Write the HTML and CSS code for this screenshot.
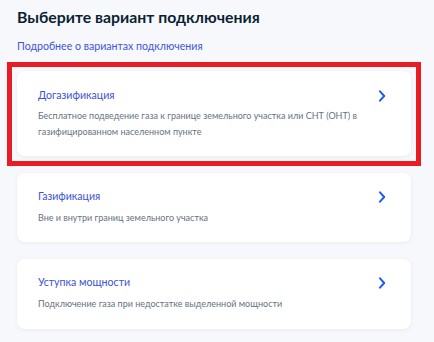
FILE: index.html
```html
<!DOCTYPE html>
<html lang="ru">
<head>
<meta charset="utf-8">
<link rel="stylesheet" href="styles.css">
</head>
<body>
<main class="page">
  <h1 class="title">Выберите вариант подключения</h1>
  <a class="more" href="#">Подробнее о вариантах подключения</a>
  <div class="list">
    <a class="card card--marked" href="#">
      <div class="card__body">
        <div class="card__title">Догазификация</div>
        <div class="card__desc">Бесплатное подведение газа к границе земельного участка или СНТ (ОНТ) в газифицированном населенном пункте</div>
      </div>
      <svg class="chev" width="8" height="12" viewBox="0 0 8 12"><path d="M2 1.3 L6.2 6 L2 10.7" fill="none" stroke="#1d5deb" stroke-width="2" stroke-linecap="round" stroke-linejoin="round"/></svg>
    </a>
    <a class="card" href="#">
      <div class="card__body">
        <div class="card__title">Газификация</div>
        <div class="card__desc">Вне и внутри границ земельного участка</div>
      </div>
      <svg class="chev" width="8" height="12" viewBox="0 0 8 12"><path d="M2 1.3 L6.2 6 L2 10.7" fill="none" stroke="#1d5deb" stroke-width="2" stroke-linecap="round" stroke-linejoin="round"/></svg>
    </a>
    <a class="card" href="#">
      <div class="card__body">
        <div class="card__title">Уступка мощности</div>
        <div class="card__desc">Подключение газа при недостатке выделенной мощности</div>
      </div>
      <svg class="chev" width="8" height="12" viewBox="0 0 8 12"><path d="M2 1.3 L6.2 6 L2 10.7" fill="none" stroke="#1d5deb" stroke-width="2" stroke-linecap="round" stroke-linejoin="round"/></svg>
    </a>
  </div>
</main>
</body>
</html>
```
FILE: styles.css
```css
* { box-sizing: border-box; }
html, body { margin: 0; padding: 0; }
body {
  background: #f6f8fb;
  font-family: Lato, "Noto Sans", sans-serif;
  color: #0b1f33;
  width: 434px;
  height: 342px;
  overflow: hidden;
}
.page {
  padding: 7px 23px 0 17px;
}
.title {
  margin: 0;
  font-size: 15.8px;
  line-height: 20px;
  font-weight: 700;
  color: #0b1f33;
}
.more {
  display: block;
  margin-top: 12px;
  font-size: 10.6px;
  line-height: 14px;
  color: #3f56d6;
  text-decoration: none;
}
.list {
  margin-top: 18px;
  display: flex;
  flex-direction: column;
  gap: 16.5px;
}
.card {
  position: relative;
  display: flex;
  align-items: flex-start;
  gap: 16px;
  background: #fff;
  border-radius: 8px;
  box-shadow: 0 1px 4px rgba(11, 31, 51, 0.06);
  padding: 15.5px 25px 17px 21px;
  text-decoration: none;
}
.card--marked::after {
  content: "";
  position: absolute;
  top: -9px;
  left: -10px;
  right: -10px;
  bottom: -10px;
  border: 5px solid #e81c24;
  pointer-events: none;
}
.card__body {
  flex: 1;
}
.card__title {
  font-size: 10.6px;
  line-height: 16px;
  color: #4052d6;
}
.card__desc {
  margin-top: 5.6px;
  font-size: 9px;
  line-height: 15.6px;
  color: #66727f;
}
.chev {
  flex: none;
  margin-top: 3px;
}
```
